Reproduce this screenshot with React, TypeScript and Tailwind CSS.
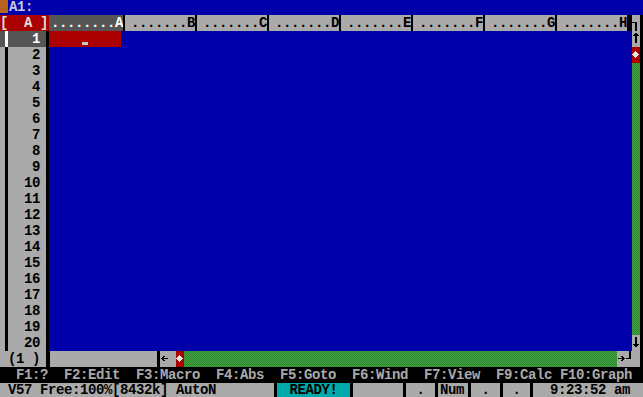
import { Fragment } from "react";

const COLS = ["B", "C", "D", "E", "F", "G", "H"];
const ROWS = Array.from({ length: 20 }, (_, i) => i + 1);

// 8x16 VGA-style bitmaps for the scroll bar symbols
const UP = [0, 0, 0x18, 0x3c, 0x7e, 0x18, 0x18, 0x18, 0x18, 0x18, 0x18, 0x18, 0, 0, 0, 0];
const DOWN = [0, 0, 0x18, 0x18, 0x18, 0x18, 0x18, 0x18, 0x18, 0x7e, 0x3c, 0x18, 0, 0, 0, 0];
const LEFT = [0, 0, 0, 0, 0, 0x30, 0x60, 0xfe, 0x60, 0x30, 0, 0, 0, 0, 0, 0];
const RIGHT = [0, 0, 0, 0, 0, 0x18, 0x0c, 0xfe, 0x0c, 0x18, 0, 0, 0, 0, 0, 0];
const DIAMOND = [0, 0, 0, 0, 0x10, 0x38, 0x7c, 0xfe, 0x7c, 0x38, 0x10, 0, 0, 0, 0, 0];
const CORNER_TR = [0, 0, 0, 0, 0, 0, 0, 0xf8, 0x18, 0x18, 0x18, 0x18, 0x18, 0x18, 0x18, 0x18];
const CORNER_BR = [0x18, 0x18, 0x18, 0x18, 0x18, 0x18, 0x18, 0xf8, 0, 0, 0, 0, 0, 0, 0, 0];

function Glyph({ rows, color = "#000" }: { rows: number[]; color?: string }) {
  const rects: JSX.Element[] = [];
  rows.forEach((bits, y) => {
    for (let x = 0; x < 8; x++) {
      if (bits & (0x80 >> x)) rects.push(<rect key={`${x}-${y}`} x={x} y={y} width={1} height={1} />);
    }
  });
  return (
    <svg width={8} height={16} viewBox="0 0 8 16" fill={color} shapeRendering="crispEdges" className="block">
      {rects}
    </svg>
  );
}

function RowNumber({ n }: { n: number }) {
  const active = n === 1;
  return (
    <div className={`flex h-[16px] ${active ? "bg-[#555555] text-white" : "bg-[#aaaaaa] text-black"}`}>
      <div className="w-[5px]" />
      <div className={`w-[3px] ${active ? "bg-white" : "bg-black"}`} />
      <div className="w-[32px] text-right">{n}</div>
      <div className="w-[6px]" />
      <div className="w-[3px] bg-black" />
    </div>
  );
}

function Bar() {
  return <div className="w-[3px] bg-black" />;
}

export default function App() {
  return (
    <div className="w-[643px] h-[397px] overflow-hidden bg-black font-['Liberation_Mono',monospace] font-bold text-[14px] leading-[16px] tracking-[-0.4px]">
      {/* Top line: current cell */}
      <div className="flex h-[15px] bg-[#0000aa]">
        <div className="w-[8px] h-[13px] bg-[#b8621c]" />
        <span className="ml-[1px] leading-[15px] text-[#c8c8e0]">A1:</span>
      </div>

      {/* Column headers */}
      <div className="flex h-[16px]">
        <div className="w-[49px] bg-[#aa0000] text-[#dcdcdc] whitespace-pre">[  A ]</div>
        <div className="w-[74px] bg-[#555555] text-white text-right whitespace-pre">........A</div>
        {COLS.map((c) => (
          <Fragment key={c}>
            <div className="w-[2px] bg-black" />
            <div className="w-[70px] bg-[#aaaaaa] text-black text-right whitespace-pre">.......{c}</div>
          </Fragment>
        ))}
        <div className="w-[5px] bg-black" />
        <div className="w-[8px] bg-[#aaaaaa]">
          <Glyph rows={CORNER_TR} />
        </div>
      </div>

      {/* Grid body */}
      <div className="flex h-[320px]">
        <div className="w-[49px] flex flex-col">
          {ROWS.map((n) => (
            <RowNumber key={n} n={n} />
          ))}
        </div>
        <div className="w-[583px] bg-[#0000aa] flex flex-col">
          <div className="w-[72px] h-[16px] bg-[#aa0000] pt-[11px] pl-[33px]">
            <div className="w-[6px] h-[3px] bg-[#c8c8c8]" />
          </div>
        </div>
        <div className="w-[8px] flex flex-col">
          <div className="h-[16px] bg-[#aaaaaa]">
            <Glyph rows={UP} />
          </div>
          <div className="h-[16px] bg-[#aa0000]">
            <Glyph rows={DIAMOND} color="#e4e4e4" />
          </div>
          <div className="h-[272px] bg-[repeating-conic-gradient(#2a892a_0_25%,#46a046_0_50%)] bg-[length:2px_2px]" />
          <div className="h-[16px] bg-[#aaaaaa]">
            <Glyph rows={DOWN} />
          </div>
        </div>
      </div>

      {/* Horizontal scroll row */}
      <div className="flex h-[16px]">
        <div className="w-[46px] bg-[#aaaaaa] text-black pl-[8px] whitespace-pre">(1 )</div>
        <div className="w-[4px] bg-black" />
        <div className="w-[107px] bg-[#aaaaaa]" />
        <div className="w-[3px] bg-black" />
        <div className="w-[16px] bg-[#aaaaaa] pl-[1px]">
          <Glyph rows={LEFT} />
        </div>
        <div className="w-[8px] bg-[#aa0000]">
          <Glyph rows={DIAMOND} color="#e4e4e4" />
        </div>
        <div className="w-[433px] bg-[repeating-conic-gradient(#2a892a_0_25%,#46a046_0_50%)] bg-[length:2px_2px]" />
        <div className="w-[23px] bg-[#aaaaaa] flex pl-[1px]">
          <Glyph rows={RIGHT} />
          <Glyph rows={CORNER_BR} />
        </div>
      </div>

      {/* Function keys */}
      <div className="h-[16px] bg-black text-[#aaaaaa] whitespace-pre">
        {"  F1:?  F2:Edit  F3:Macro  F4:Abs  F5:Goto  F6:Wind  F7:View  F9:Calc F10:Graph"}
      </div>

      {/* Status line */}
      <div className="flex h-[14px] bg-[#aaaaaa] text-black leading-[14px]">
        <div className="w-[274px] pl-[8px] whitespace-pre">V57 Free:100%[8432k] AutoN</div>
        <Bar />
        <div className="w-[73px] bg-[#00aaaa] text-center">READY!</div>
        <Bar />
        <div className="w-[50px]" />
        <Bar />
        <div className="w-[29px] text-center">.</div>
        <Bar />
        <div className="w-[30px] pl-[2px]">Num</div>
        <Bar />
        <div className="w-[29px] text-center">.</div>
        <Bar />
        <div className="w-[27px] text-center">.</div>
        <Bar />
        <div className="flex-1 text-right pr-[13px] whitespace-pre">9:23:52 am</div>
      </div>
    </div>
  );
}
